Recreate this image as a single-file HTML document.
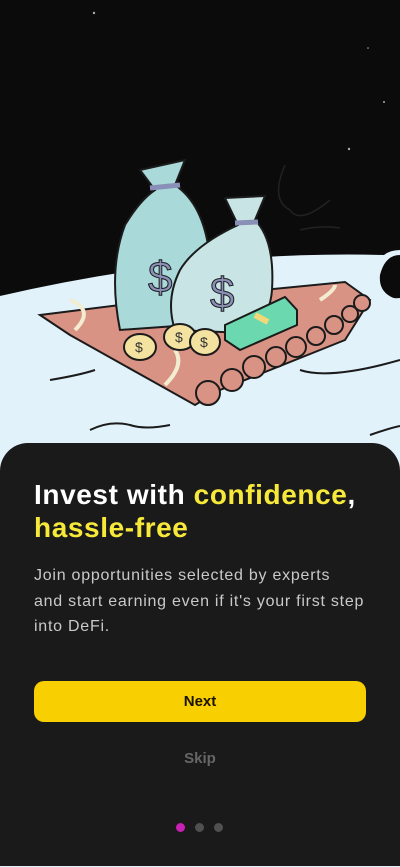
<!DOCTYPE html>
<html><head><meta charset="utf-8"><style>
*{margin:0;padding:0;box-sizing:border-box}
body{width:400px;height:867px;overflow:hidden;background:#e2f2fb;font-family:"Liberation Sans",sans-serif;position:relative}
svg.bg{position:absolute;left:0;top:0}
.card{position:absolute;left:0;top:443px;width:400px;height:423px;background:#1a1a1a;border-radius:28px 28px 0 0}
h1{position:absolute;left:34px;top:478px;font-size:28px;line-height:33px;color:#fff;font-weight:bold;letter-spacing:0.6px;white-space:nowrap}
h1 span{color:#f7e93a}
p{position:absolute;left:34px;top:563px;width:340px;font-size:16px;line-height:25.5px;color:#c9c9c9;letter-spacing:0.75px;white-space:nowrap}
.btn{position:absolute;left:34px;top:681px;width:332px;height:41px;background:#f8cf00;border-radius:10px;text-align:center;line-height:41px;font-weight:bold;font-size:15px;color:#1a1200}
.skip{position:absolute;left:0;width:400px;top:750px;text-align:center;font-weight:bold;font-size:15px;color:#666}
.dot{position:absolute;top:823px;width:9px;height:9px;border-radius:50%;background:#505050}
</style></head><body>
<svg class="bg" width="400" height="445" viewBox="0 0 400 445">
<path d="M0 0H400V255Q385 255 380 275Q378 295 400 300V0Z" fill="#0b0b0b"/>
<path d="M0 0H400V250Q385 250 378 262L0 296Z" fill="#0b0b0b"/>
<path d="M0 296Q200 250 384 255Q376 270 378 285Q385 300 400 298V445H0Z" fill="#e2f2fb"/>
<g fill="#aaa"><circle cx="94" cy="13" r="1.2"/><circle cx="349" cy="149" r="1.2"/><circle cx="384" cy="102" r="1"/><circle cx="368" cy="48" r="0.8"/></g>
<path d="M285 165Q270 200 290 210Q300 225 330 200M300 230Q320 225 340 228" stroke="#222" stroke-width="1.5" fill="none"/>
<g stroke="#1b1b1b" stroke-width="2">
<path d="M40 315L160 300L345 282L370 300L345 340L220 390L195 405L70 335Z" fill="#d99384"/>
<g fill="#d99384">
<circle cx="208" cy="393" r="12"/><circle cx="232" cy="380" r="11"/><circle cx="254" cy="367" r="11"/><circle cx="276" cy="357" r="10"/><circle cx="296" cy="347" r="10"/><circle cx="316" cy="336" r="9"/><circle cx="334" cy="325" r="9"/><circle cx="350" cy="314" r="8"/><circle cx="362" cy="303" r="8"/>
</g>
<path d="M75 330Q95 310 70 300M165 385Q185 365 175 350M320 300Q335 290 335 285" stroke="#f2ecd0" stroke-width="4" fill="none"/>
<path d="M140 170L185 160L175 185Q205 205 210 260Q212 305 190 325L120 330Q108 270 125 225Q140 200 155 190Z" fill="#a9d9d9"/>
<path d="M150 188L180 185" stroke="#8a8fb8" stroke-width="5"/>
<path d="M225 198L265 196L255 220Q275 240 272 290Q270 320 245 333L175 330Q165 300 180 270Q195 245 238 225Z" fill="#c8e4e4"/>
<path d="M235 223L258 222" stroke="#8a8fb8" stroke-width="5"/>
<path d="M225 325L285 297L297 310V325L240 350L225 340Z" fill="#6bd8b0"/>
<path d="M255 315L268 322" stroke="#f1d97a" stroke-width="6"/>
<g fill="#f3e2a0"><ellipse cx="140" cy="347" rx="16" ry="13"/><ellipse cx="180" cy="337" rx="16" ry="13"/><ellipse cx="205" cy="342" rx="15" ry="13"/></g>
</g>
<g font-family="Liberation Sans" font-size="44" fill="#8a8fb8" stroke="#1b1b1b" stroke-width="1"><text x="148" y="292">$</text><text x="210" y="308">$</text></g>
<g font-family="Liberation Sans" font-size="14" fill="#333"><text x="135" y="352">$</text><text x="175" y="342">$</text><text x="200" y="347">$</text></g>
<path d="M50 380Q80 375 95 370M90 430Q110 420 130 425Q145 430 170 425M300 370Q330 380 400 360M370 435Q390 428 400 426" stroke="#1b1b1b" stroke-width="2" fill="none"/>
</svg>
<div class="card"></div>
<h1>Invest with <span>confidence</span>,<br><span>hassle-free</span></h1>
<p>Join opportunities selected by experts<br>and start earning even if it's your first step<br>into DeFi.</p>
<div class="btn">Next</div>
<div class="skip">Skip</div>
<div class="dot" style="left:176px;background:#c81fb4"></div>
<div class="dot" style="left:195px"></div>
<div class="dot" style="left:214px"></div>
</body></html>
